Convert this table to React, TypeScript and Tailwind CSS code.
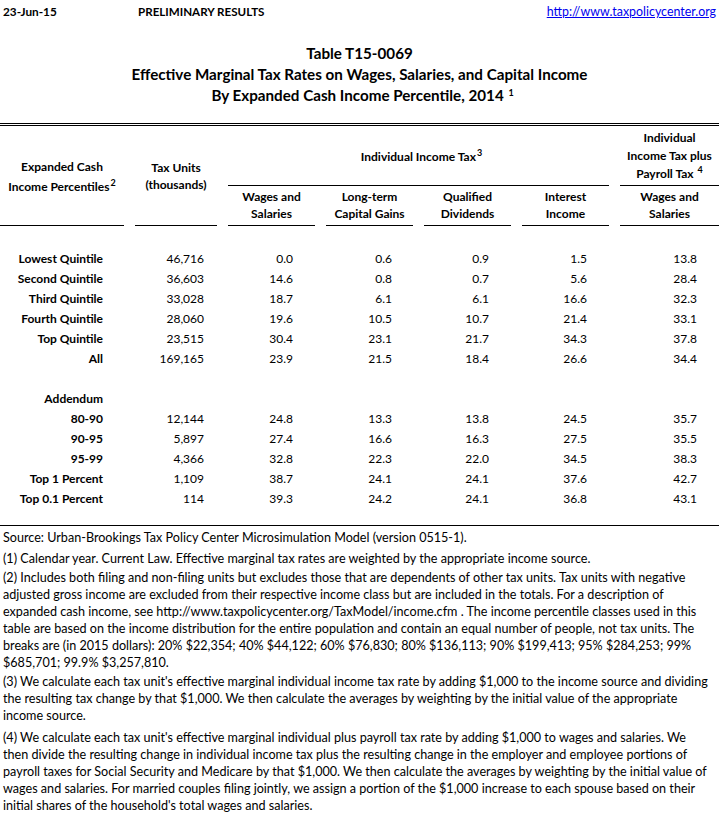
import React from "react";

const font = { fontFamily: "Lato, 'Open Sans', sans-serif" };

type Row = { label: string; vals: string[] } | null;

const rows: Row[] = [
  { label: "Lowest Quintile", vals: ["46,716", "0.0", "0.6", "0.9", "1.5", "13.8"] },
  { label: "Second Quintile", vals: ["36,603", "14.6", "0.8", "0.7", "5.6", "28.4"] },
  { label: "Third Quintile", vals: ["33,028", "18.7", "6.1", "6.1", "16.6", "32.3"] },
  { label: "Fourth Quintile", vals: ["28,060", "19.6", "10.5", "10.7", "21.4", "33.1"] },
  { label: "Top Quintile", vals: ["23,515", "30.4", "23.1", "21.7", "34.3", "37.8"] },
  { label: "All", vals: ["169,165", "23.9", "21.5", "18.4", "26.6", "34.4"] },
  null,
  { label: "Addendum", vals: ["", "", "", "", "", ""] },
  { label: "80-90", vals: ["12,144", "24.8", "13.3", "13.8", "24.5", "35.7"] },
  { label: "90-95", vals: ["5,897", "27.4", "16.6", "16.3", "27.5", "35.5"] },
  { label: "95-99", vals: ["4,366", "32.8", "22.3", "22.0", "34.5", "38.3"] },
  { label: "Top 1 Percent", vals: ["1,109", "38.7", "24.1", "24.1", "37.6", "42.7"] },
  { label: "Top 0.1 Percent", vals: ["114", "39.3", "24.2", "24.1", "36.8", "43.1"] },
];

const valPad = ["pr-[13px]", "pr-[22px]", "pr-[21px]", "pr-[22px]", "pr-[22px]", "pr-[22px]"];

const Sup = ({ children }: { children: React.ReactNode }) => (
  <span className="text-[9px] leading-[9px] relative -top-[5px] ml-[1px]">{children}</span>
);

const footnotes: string[][] = [
  ["Source: Urban-Brookings Tax Policy Center Microsimulation Model (version 0515-1)."],
  ["(1) Calendar year. Current Law. Effective marginal tax rates are weighted by the appropriate income source."],
  [
    "(2) Includes both filing and non-filing units but excludes those that are dependents of other tax units. Tax units with negative",
    "adjusted gross income are excluded from their respective income class but are included in the totals. For a description of",
    "expanded cash income, see http://www.taxpolicycenter.org/TaxModel/income.cfm . The income percentile classes used in this",
    "table are based on the income distribution for the entire population and contain an equal number of people, not tax units. The",
    "breaks are (in 2015 dollars): 20% $22,354; 40% $44,122; 60% $76,830; 80% $136,113; 90% $199,413; 95% $284,253; 99%",
    "$685,701; 99.9% $3,257,810.",
  ],
  [
    "(3) We calculate each tax unit's effective marginal individual income tax rate by adding $1,000 to the income source and dividing",
    "the resulting tax change by that $1,000. We then calculate the averages by weighting by the initial value of the appropriate",
    "income source.",
  ],
  [
    "(4) We calculate each tax unit's effective marginal individual plus payroll tax rate by adding $1,000 to wages and salaries. We",
    "then divide the resulting change in individual income tax plus the resulting change in the employer and employee portions of",
    "payroll taxes for Social Security and Medicare by that $1,000. We then calculate the averages by weighting by the initial value of",
    "wages and salaries. For married couples filing jointly, we assign a portion of the $1,000 increase to each spouse based on their",
    "initial shares of the household's total wages and salaries.",
  ],
];

const fnMargins = ["mt-[3px]", "mt-[4px]", "mt-[2px]", "mt-[2px]", "mt-[5px]"];

export default function App() {
  return (
    <div className="w-[719px] h-[833px] bg-white text-black overflow-hidden" style={font}>
      {/* top bar */}
      <div className="flex items-center h-[24px] leading-[14px]">
        <div className="pl-[3px] w-[138px] font-bold text-[11.8px]">23-Jun-15</div>
        <div className="font-bold text-[11.6px]">PRELIMINARY RESULTS</div>
        <div className="ml-auto pr-[3px] text-[12.4px] text-[#0000ee] underline">http://www.taxpolicycenter.org</div>
      </div>

      {/* title */}
      <div className="mt-[19px] flex flex-col items-center font-bold text-[15.2px] leading-[21px]">
        <div>Table T15-0069</div>
        <div>Effective Marginal Tax Rates on Wages, Salaries, and Capital Income</div>
        <div className="pl-[6px]">
          By Expanded Cash Income Percentile, 2014 <Sup>1</Sup>
        </div>
      </div>

      {/* double rule */}
      <div className="mt-[17px] border-t border-black" />
      <div className="mt-[1px] border-t border-black" />

      {/* header */}
      <div className="grid grid-cols-[124px_82px_87px_87px_87px_87px_99px] gap-x-[11px] grid-rows-[60px_40px] font-bold text-[12px] leading-[17px] text-center">
        <div className="row-span-2 border-b border-black flex flex-col justify-center pt-[2px] leading-[20px]">
          <div>Expanded Cash</div>
          <div>
            Income Percentiles<Sup>2</Sup>
          </div>
        </div>
        <div className="row-span-2 border-b border-black flex flex-col justify-center pt-[1px]">
          <div>Tax Units</div>
          <div>(thousands)</div>
        </div>
        <div className="col-span-4 border-b border-black flex items-center justify-center pl-[6px] pt-[2px]">
          <div>
            Individual Income Tax<Sup>3</Sup>
          </div>
        </div>
        <div className="border-b border-black flex flex-col justify-center pt-[1px] leading-[18px]">
          <div>Individual</div>
          <div>Income Tax plus</div>
          <div>
            Payroll Tax <Sup>4</Sup>
          </div>
        </div>
        {[
          ["Wages and", "Salaries"],
          ["Long-term", "Capital Gains"],
          ["Qualified", "Dividends"],
          ["Interest", "Income"],
          ["Wages and", "Salaries"],
        ].map((h, i) => (
          <div key={i} className="border-b border-black flex flex-col justify-center pb-[1px]">
            <div>{h[0]}</div>
            <div>{h[1]}</div>
          </div>
        ))}
      </div>

      {/* body */}
      <div className="pt-[23px] pb-[16px] grid grid-cols-[124px_82px_87px_87px_87px_87px_99px] gap-x-[11px] auto-rows-[20px] text-[12px] leading-[20px]">
        {rows.map((r, i) =>
          r === null ? (
            <div key={i} className="col-span-7" />
          ) : (
            <React.Fragment key={i}>
              <div className="text-right pr-[21px] font-bold whitespace-nowrap">{r.label}</div>
              {r.vals.map((v, j) => (
                <div key={j} className={`text-right ${valPad[j]}`}>
                  {v}
                </div>
              ))}
            </React.Fragment>
          )
        )}
      </div>

      <div className="border-t border-black" />

      {/* footnotes */}
      <div className="pl-[3px] text-[12.6px] leading-[17px]">
        {footnotes.map((p, i) => (
          <div key={i} className={fnMargins[i]}>
            {p.map((l, k) => (
              <div key={k} className="whitespace-nowrap">
                {l}
              </div>
            ))}
          </div>
        ))}
      </div>
    </div>
  );
}
